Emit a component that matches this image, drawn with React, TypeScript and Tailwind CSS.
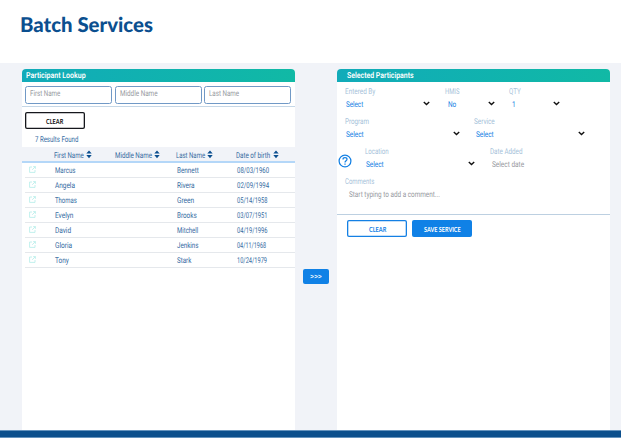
import { useLayoutEffect, useRef, useState } from "react";
import type { ReactNode } from "react";

// Text condensed horizontally so that it occupies exactly `width` pixels.
// The imperceptible rotation keeps glyph heights from snapping to whole pixels.
function Fit({ width, className = "", children }: { width: number; className?: string; children: ReactNode }) {
  const ref = useRef<HTMLSpanElement>(null);
  const [scale, setScale] = useState(1);
  useLayoutEffect(() => {
    if (ref.current) {
      const natural = ref.current.offsetWidth;
      if (natural > 0) setScale(width / natural);
    }
  }, [width]);
  return (
    <span className={`block shrink-0 whitespace-nowrap ${className}`} style={{ width }}>
      <span ref={ref} className="inline-block origin-left" style={{ transform: `rotate(0.05deg) scaleX(${scale})` }}>
        {children}
      </span>
    </span>
  );
}

const Sort = () => (
  <svg viewBox="0 0 6 9" className="ml-[2px] h-[9px] w-[6px] shrink-0 fill-[#0b4f8f]">
    <path d="M3 0.4 5.7 3.5H.3ZM.3 5.1H5.7L3 8.2Z" />
  </svg>
);

const OpenIcon = () => (
  <svg viewBox="0 0 7 7" className="h-[7px] w-[7px] shrink-0" fill="none" stroke="#b3ece8" strokeWidth=".8">
    <path d="M3 1H.6V6.4H6V4M4.2.6H6.4V2.8M6.3.7 3.2 3.8" />
  </svg>
);

const Chevron = () => (
  <svg viewBox="0 0 7 5" className="h-[5px] w-[7px] shrink-0" fill="none" stroke="#111" strokeWidth="1.4">
    <path d="M.8 1 3.5 3.6 6.2 1" />
  </svg>
);

const SearchBox = ({ label, width }: { label: string; width: number }) => (
  <div className="h-[18px] w-[87px] rounded-[2.5px] border border-[#7199c6] pl-[4px] leading-[13px] text-[#96999e]">
    <Fit width={width}>{label}</Fit>
  </div>
);

const rows: [string, number, string, number, string, number][] = [
  ["Marcus", 20.5, "Bennett", 22, "08/03/1960", 32],
  ["Angela", 20, "Rivera", 17.5, "02/09/1994", 32],
  ["Thomas", 22, "Green", 17, "05/14/1958", 30.5],
  ["Evelyn", 18.5, "Brooks", 19.5, "03/07/1951", 30.5],
  ["David", 16, "Mitchell", 21.5, "04/19/1996", 30.5],
  ["Gloria", 17, "Jenkins", 21.5, "04/11/1968", 29],
  ["Tony", 13.5, "Stark", 14.5, "10/24/1979", 30],
];

function Lookup() {
  return (
    <section className="flex h-[361px] w-[273px] flex-col rounded-t-[4px] bg-white">
      <h2 className="h-[13px] shrink-0 rounded-t-[4px] bg-gradient-to-r from-[#12abb9] to-[#11b9a5] pl-[4px] text-[8.2px] leading-[13.5px] font-semibold text-white">
        <Fit width={60}>Participant Lookup</Fit>
      </h2>
      <div className="flex h-[25px] shrink-0 gap-[2.5px] border-b border-[#c5d7e7] pt-[4px] pl-[3px]">
        <SearchBox label="First Name" width={30.5} />
        <SearchBox label="Middle Name" width={37.5} />
        <SearchBox label="Last Name" width={30} />
      </div>
      <button className="mt-[4.5px] ml-[3px] flex h-[17.5px] w-[60px] shrink-0 items-center justify-center rounded-[2px] pt-[1px] font-['Lato',sans-serif] text-[7px] font-bold text-[#111] shadow-[inset_0_0_0_1.3px_#15171c]">
        <Fit width={17.5}>CLEAR</Fit>
      </button>
      <div className="h-[18px] shrink-0 pt-[5px] pl-[13.2px] leading-[11px]">
        <Fit width={43.5}>7 Results Found</Fit>
      </div>
      <div className="grid h-[15.5px] shrink-0 grid-cols-[32px_61px_60.5px_60.5px_1fr] items-center border-b-2 border-[#b4d7f8] bg-[#f1f3f8] pt-[1.5px]">
        <span />
        <div className="flex items-center"><Fit width={30}>First Name</Fit><Sort /></div>
        <div className="flex items-center"><Fit width={37}>Middle Name</Fit><Sort /></div>
        <div className="flex items-center"><Fit width={29}>Last Name</Fit><Sort /></div>
        <div className="flex items-center"><Fit width={34.5}>Date of birth</Fit><Sort /></div>
      </div>
      {rows.map(([first, fw, last, lw, dob, dw]) => (
        <div key={first} className="ml-[3px] grid h-[15px] shrink-0 grid-cols-[30px_121.5px_60.5px_1fr] items-center border-b border-[#e5e8ec]">
          <div className="pl-[4px]"><OpenIcon /></div>
          <Fit width={fw}>{first}</Fit>
          <Fit width={lw}>{last}</Fit>
          <Fit width={dw}>{dob}</Fit>
        </div>
      ))}
    </section>
  );
}

function Field({ label, labelWidth, value, valueWidth, className, valueClass = "pl-[1.5px] text-[#1480e4]", chevron = true }: {
  label: string; labelWidth: number; value: string; valueWidth: number; className: string; valueClass?: string; chevron?: boolean;
}) {
  return (
    <div className={`h-[30px] shrink-0 ${className}`}>
      <div className="h-[12px] leading-[12px] text-[#a5bfd9]"><Fit width={labelWidth}>{label}</Fit></div>
      <div className={`flex h-[14px] items-center justify-between ${valueClass}`}>
        <Fit width={valueWidth}>{value}</Fit>
        {chevron && <Chevron />}
      </div>
    </div>
  );
}

function Selected() {
  return (
    <section className="flex h-[361px] w-[272.5px] flex-col rounded-t-[4px] bg-white">
      <h2 className="h-[13px] shrink-0 rounded-t-[4px] bg-gradient-to-r from-[#12abb9] to-[#11b9a5] pl-[10px] text-[8.2px] leading-[13.5px] font-semibold text-white">
        <Fit width={67}>Selected Participants</Fit>
      </h2>
      <div className="mt-[2.5px] flex h-[30px] shrink-0 pl-[7.5px]">
        <Field label="Entered By" labelWidth={30} value="Select" valueWidth={17} className="w-[85px]" />
        <Field label="HMIS" labelWidth={14.5} value="No" valueWidth={8} className="ml-[15px] w-[50px]" valueClass="pl-[3.5px] text-[#1480e4]" />
        <Field label="QTY" labelWidth={11.5} value="1" valueWidth={4} className="ml-[14.5px] w-[50.5px]" valueClass="pl-[3px] text-[#1480e4]" />
      </div>
      <div className="flex h-[30px] shrink-0 pl-[7.5px]">
        <Field label="Program" labelWidth={24} value="Select" valueWidth={17.5} className="w-[115px]" />
        <Field label="Service" labelWidth={20.5} value="Select" valueWidth={17.5} className="ml-[14.5px] w-[110.5px]" />
      </div>
      <div className="flex h-[30px] shrink-0">
        <svg viewBox="0 0 14 14" className="mt-[9.5px] ml-px h-[14px] w-[14px] shrink-0" fill="none" stroke="#1480e4" strokeWidth="1.25">
          <circle cx="7" cy="7" r="5.9" />
          <path d="M5 5.4C5 4.2 5.9 3.6 7 3.6s2 .7 2 1.7C9 6.7 7 6.7 7 8.5M7 9.5v1.2" />
        </svg>
        <Field label="Location" labelWidth={23.5} value="Select" valueWidth={17.5} className="ml-[12.5px] w-[110px]" />
        <Field label="Date Added" labelWidth={32.5} value="Select date" valueWidth={32} className="ml-[15px] w-[60px]" valueClass="pl-[2.5px] text-[#96999e]" chevron={false} />
      </div>
      <div className="h-[40px] shrink-0 border-b border-[#bdd0e1] pl-[7.5px]">
        <Field label="Comments" labelWidth={29.5} value="Start typing to add a comment..." valueWidth={90.5} className="w-[150px]" valueClass="pl-[4px] text-[#96999e]" chevron={false} />
      </div>
      <div className="flex gap-[5px] pt-[5px] pl-[10px] font-['Lato',sans-serif] text-[7px] font-bold">
        <button className="flex h-[17.5px] w-[60px] items-center justify-center rounded-[2px] pt-[1px] text-[#1480e4] shadow-[inset_0_0_0_1.3px_#1480e4]">
          <Fit width={17.5}>CLEAR</Fit>
        </button>
        <button className="flex h-[17.5px] w-[60px] items-center justify-center rounded-[2px] bg-[#1081e6] pt-[1px] text-white">
          <Fit width={37}>SAVE SERVICE</Fit>
        </button>
      </div>
    </section>
  );
}

export default function App() {
  return (
    <div className="h-[438px] w-[621px] overflow-hidden bg-white font-['Roboto',sans-serif] text-[8.1px] leading-[10px] text-[#336a9f]">
      <header className="h-[63px] pt-[11px] pl-[19.5px]">
        <h1 className="font-['Lato',sans-serif] text-[20.5px] leading-[26px] font-black text-[#0b4f8f]">
          <Fit width={133}>Batch Services</Fit>
        </h1>
      </header>
      <main className="flex h-[367px] bg-[#f1f3f8] pt-[6px] pl-[22px]">
        <Lookup />
        <div className="flex w-[42.3px] shrink-0 justify-center pt-[199.5px]">
          <button className="flex h-[15px] w-[26.5px] items-center justify-center rounded-[2px] bg-[#1081e6] font-medium text-white">
            <Fit width={12}>&gt;&gt;&gt;</Fit>
          </button>
        </div>
        <Selected />
      </main>
      <footer className="h-[8px] border-y border-[#6593bd] bg-[#0b4f8c]" />
    </div>
  );
}
